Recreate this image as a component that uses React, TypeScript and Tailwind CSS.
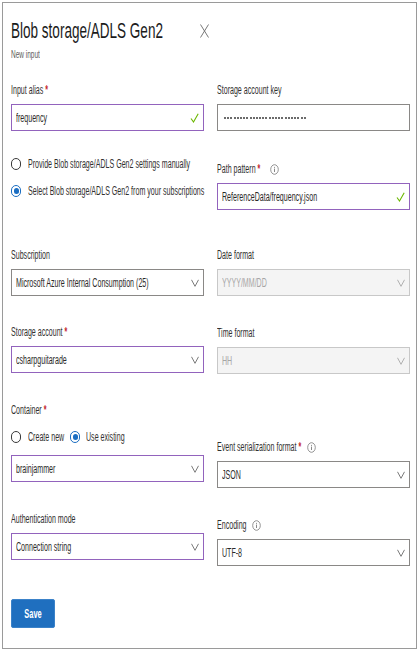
import React from "react";

const T = ({ children, className = "" }: { children: React.ReactNode; className?: string }) => (
  <span className={"inline-block origin-left scale-x-[0.59] whitespace-nowrap " + className}>{children}</span>
);

const Star = () => <span className="text-[#c4262e] font-bold"> *</span>;

const Check = () => (
  <svg width="9" height="10" viewBox="0 0 9 10" className="shrink-0">
    <path d="M1 5.5 L3.5 9 L8.2 0.8" fill="none" stroke="#6bb700" strokeWidth="1.1" />
  </svg>
);

const Chevron = ({ light = false }: { light?: boolean }) => (
  <svg width="8" height="8" viewBox="0 0 8 8" className="shrink-0">
    <polyline points="0.5,0.8 4,7.3 7.5,0.8" fill="none" stroke={light ? "#a8a8a8" : "#6b6b6b"} strokeWidth="0.9" />
  </svg>
);

const Info = () => (
  <svg width="9" height="11" viewBox="0 0 9 11" className="shrink-0">
    <ellipse cx="4.5" cy="5.5" rx="3.8" ry="4.8" fill="none" stroke="#7a7a7a" strokeWidth="0.8" />
    <line x1="4.5" y1="4.6" x2="4.5" y2="8" stroke="#7a7a7a" strokeWidth="0.9" />
    <circle cx="4.5" cy="3.2" r="0.55" fill="#7a7a7a" />
  </svg>
);

const Radio = ({ on = false }: { on?: boolean }) =>
  on ? (
    <span className="w-[10px] h-[12px] rounded-full border border-[#1b6ec2] flex items-center justify-center shrink-0">
      <span className="w-[5px] h-[6px] rounded-full bg-[#1b6ec2]" />
    </span>
  ) : (
    <span className="w-[10px] h-[12px] rounded-full border border-[#3a3a3a] shrink-0" />
  );

const Label = ({ children }: { children: React.ReactNode }) => (
  <div className="h-[14px] leading-[14px] text-[12px] text-[#323130] flex items-center">{children}</div>
);

const Box = ({
  children,
  icon,
  tone = "gray",
}: {
  children: React.ReactNode;
  icon?: React.ReactNode;
  tone?: "gray" | "purple" | "disabled";
}) => {
  const cls =
    tone === "purple"
      ? "border-[#9263bd] bg-white text-[#2b2a29]"
      : tone === "disabled"
      ? "border-[#c8c8c8] bg-[#f4f4f4] text-[#a6a6a6]"
      : "border-[#8a8886] bg-white text-[#2b2a29]";
  return (
    <div className={"mt-[7px] h-[27px] border pl-[4px] pr-[4px] flex items-center text-[12px] " + cls}>
      <div className="flex-1 min-w-0 flex items-center">{children}</div>
      {icon}
    </div>
  );
};

export default function App() {
  return (
    <div className="w-[420px] h-[651px] bg-white font-['Liberation_Sans',Arial,sans-serif] pt-[2px] pl-[2px]">
      <div className="w-[415px] h-[647px] border border-[#9a9a9a] pl-[8px] pt-[15px]">
        {/* Header */}
        <div className="flex items-center h-[26px]">
          <span className="w-[149px]">
            <T className="text-[22px] leading-[26px] text-[#1b1b1b] scale-x-[0.615]">Blob storage/ADLS Gen2</T>
          </span>
          <svg width="9" height="14" viewBox="0 0 9 14" className="ml-[40px]">
            <line x1="0.5" y1="0.5" x2="8.5" y2="13.5" stroke="#6a6a6a" strokeWidth="0.9" />
            <line x1="8.5" y1="0.5" x2="0.5" y2="13.5" stroke="#6a6a6a" strokeWidth="0.9" />
          </svg>
        </div>
        <div className="mt-[3px] h-[14px] leading-[14px] text-[11px] text-[#605e5c]">
          <T>New input</T>
        </div>

        {/* Two columns */}
        <div className="mt-[22px] grid grid-cols-[193px_193px] gap-x-[13px]">
          {/* Left column */}
          <div className="flex flex-col">
            <Label>
              <T>
                Input alias<Star />
              </T>
            </Label>
            <Box tone="purple" icon={<Check />}>
              <T>frequency</T>
            </Box>

            <div className="mt-[25px] h-[16px] flex items-center gap-[7px] text-[12px] text-[#323130]">
              <Radio />
              <T>Provide Blob storage/ADLS Gen2 settings manually</T>
            </div>
            <div className="mt-[11px] h-[16px] flex items-center gap-[7px] text-[12px] text-[#323130]">
              <Radio on />
              <T>Select Blob storage/ADLS Gen2 from your subscriptions</T>
            </div>

            <div className="mt-[49px]">
              <Label>
                <T>Subscription</T>
              </Label>
              <Box icon={<Chevron />}>
                <T>Microsoft Azure Internal Consumption (25)</T>
              </Box>
            </div>

            <div className="mt-[29px]">
              <Label>
                <T>
                  Storage account<Star />
                </T>
              </Label>
              <Box tone="purple" icon={<Chevron />}>
                <T>csharpguitarade</T>
              </Box>
            </div>

            <div className="mt-[30px]">
              <Label>
                <T>
                  Container<Star />
                </T>
              </Label>
              <div className="mt-[12px] h-[16px] flex items-center text-[12px] text-[#323130]">
                <Radio />
                <span className="ml-[7px] w-[42px]">
                  <T>Create new</T>
                </span>
                <Radio on />
                <span className="ml-[6px]">
                  <T>Use existing</T>
                </span>
              </div>
              <div className="mt-[10px]">
                <Box tone="purple" icon={<Chevron />}>
                  <T>brainjammer</T>
                </Box>
              </div>
            </div>

            <div className="mt-[30px]">
              <Label>
                <T>Authentication mode</T>
              </Label>
              <Box tone="purple" icon={<Chevron />}>
                <T>Connection string</T>
              </Box>
            </div>
          </div>

          {/* Right column */}
          <div className="flex flex-col">
            <Label>
              <T>Storage account key</T>
            </Label>
            <Box>
              <div className="flex items-center gap-[1.2px] pl-[2px]">
                {Array.from({ length: 26 }).map((_, i) => (
                  <span key={i} className="w-[2px] h-[2px] rounded-full bg-[#3a3a3a]" />
                ))}
              </div>
            </Box>

            <div className="mt-[31px]">
              <Label>
                <span className="w-[53px]">
                  <T>
                    Path pattern<Star />
                  </T>
                </span>
                <Info />
              </Label>
              <Box tone="purple" icon={<Check />}>
                <T>ReferenceData/frequency.json</T>
              </Box>
            </div>

            <div className="mt-[38px]">
              <Label>
                <T>Date format</T>
              </Label>
              <Box tone="disabled" icon={<Chevron light />}>
                <T>YYYY/MM/DD</T>
              </Box>
            </div>

            <div className="mt-[30px]">
              <Label>
                <T>Time format</T>
              </Label>
              <Box tone="disabled" icon={<Chevron light />}>
                <T>HH</T>
              </Box>
            </div>

            <div className="mt-[66px]">
              <Label>
                <span className="w-[90px]">
                  <T>
                    Event serialization format<Star />
                  </T>
                </span>
                <Info />
              </Label>
              <Box icon={<Chevron />}>
                <T>JSON</T>
              </Box>
            </div>

            <div className="mt-[30px]">
              <Label>
                <span className="w-[35px]">
                  <T>Encoding</T>
                </span>
                <Info />
              </Label>
              <Box icon={<Chevron />}>
                <T>UTF-8</T>
              </Box>
            </div>
          </div>
        </div>

        {/* Save */}
        <div className="mt-[33px]">
          <button className="w-[44px] h-[29px] bg-[#1f6fbf] rounded-[2px] border border-[#3b82c9] flex items-center justify-center text-white text-[12px] font-bold">
            <span className="inline-block scale-x-[0.62] whitespace-nowrap">Save</span>
          </button>
        </div>
      </div>
    </div>
  );
}
